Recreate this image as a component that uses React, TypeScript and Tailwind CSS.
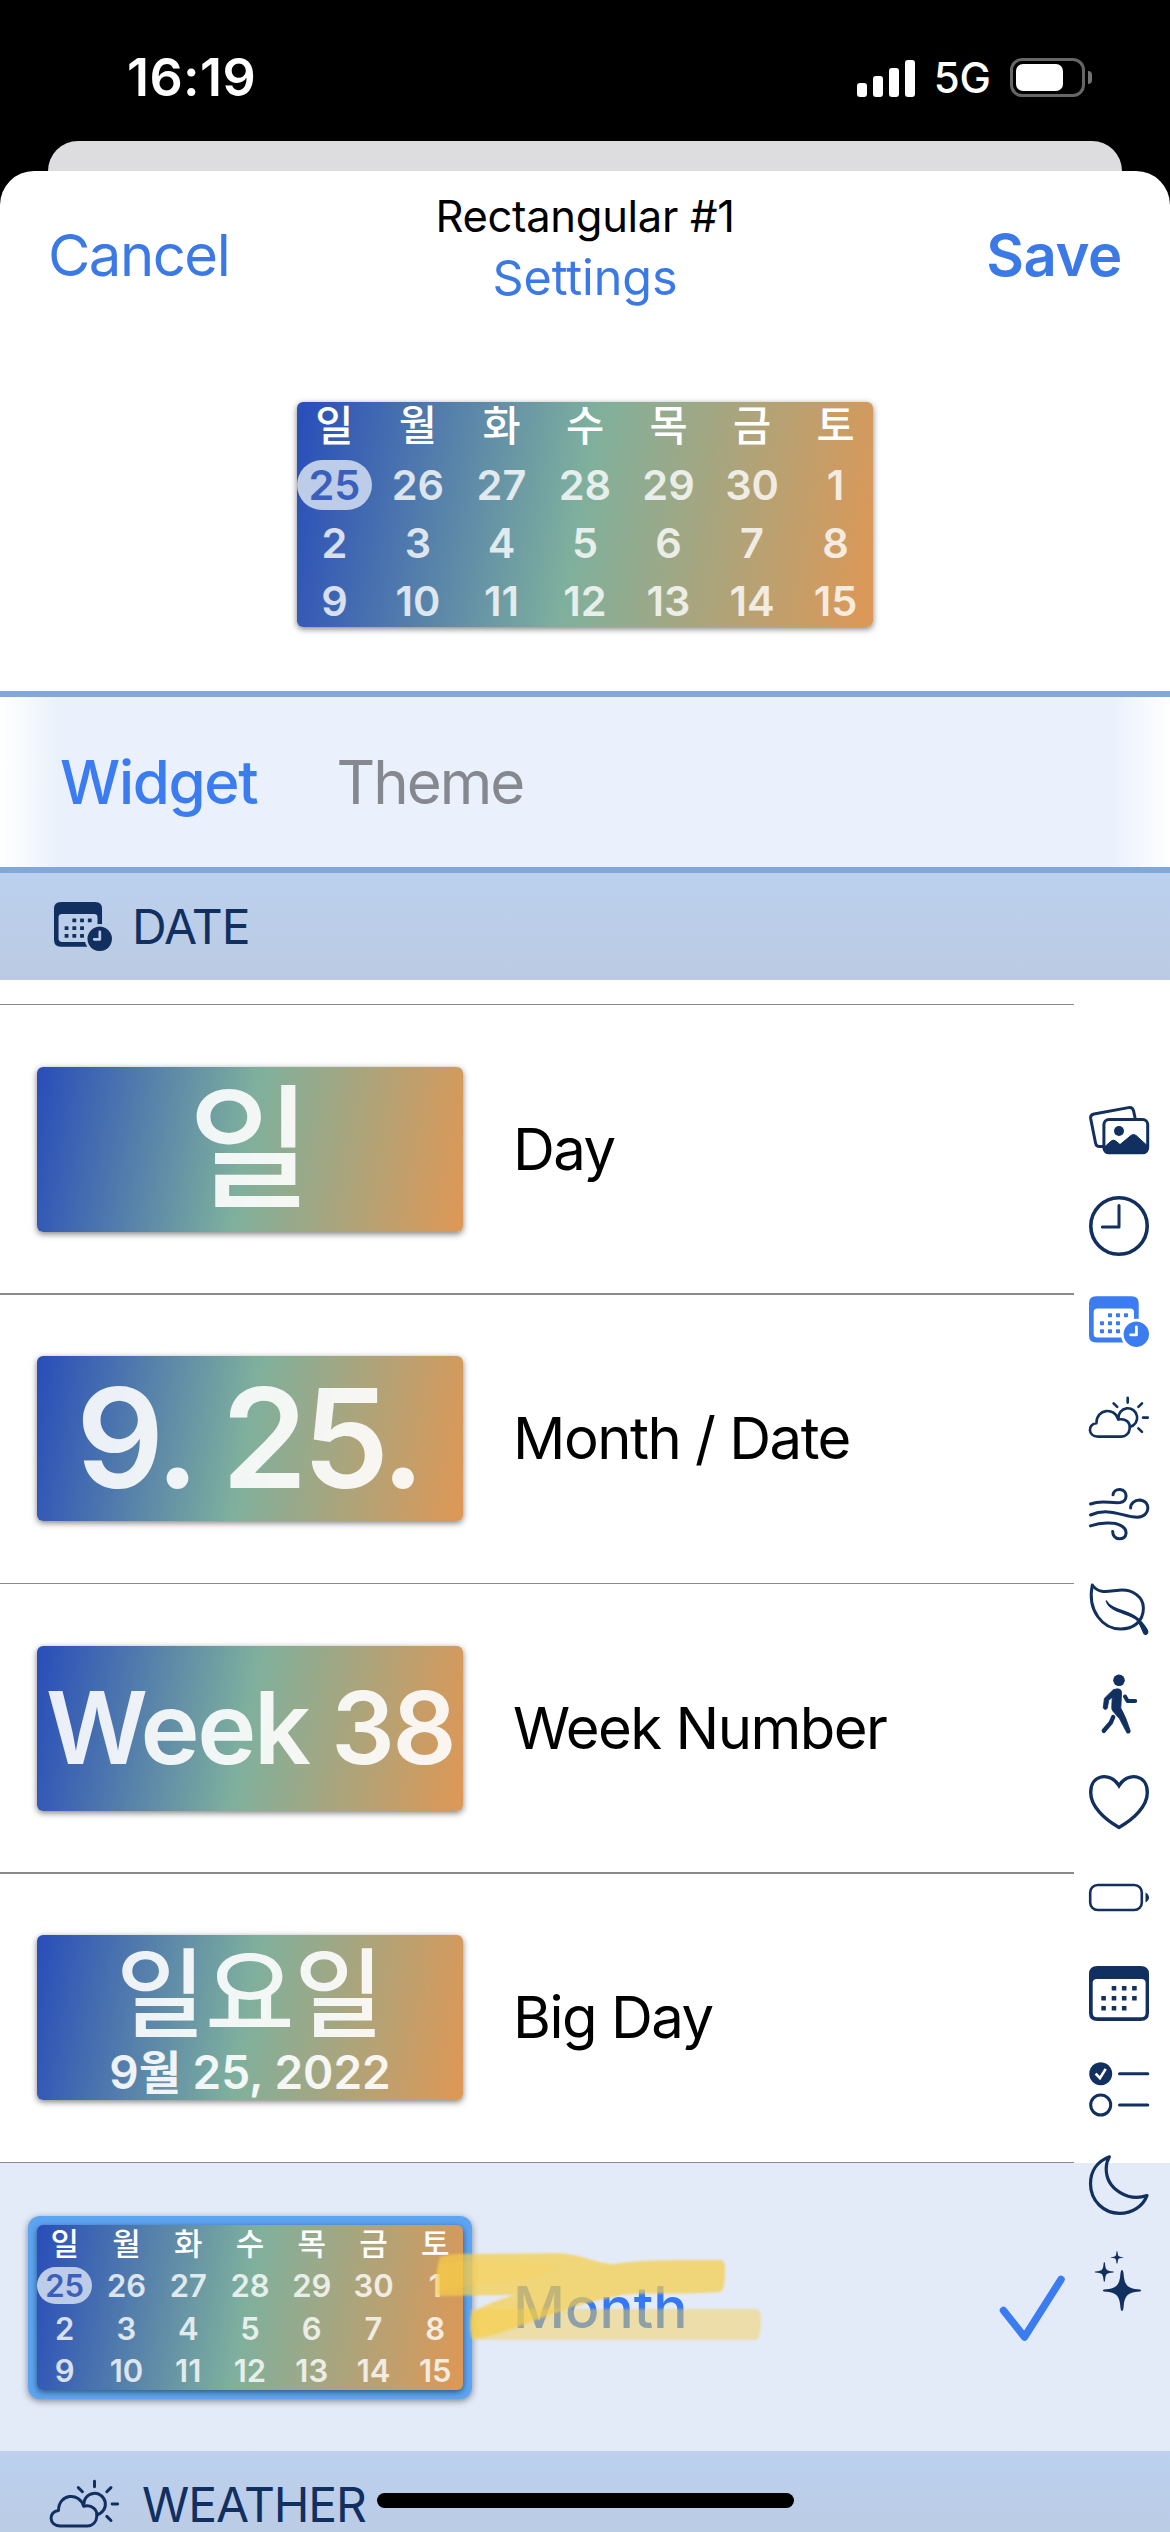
import { useId, type ReactNode } from 'react';
import clsx from 'clsx';

const weekdays = ['일', '월', '화', '수', '목', '금', '토'];

const weeks = [
  [25, 26, 27, 28, 29, 30, 1],
  [2, 3, 4, 5, 6, 7, 8],
  [9, 10, 11, 12, 13, 14, 15],
];

function Icon({ children, className = 'size-[60px]' }: { children: ReactNode; className?: string }) {
  return (
    <svg
      viewBox="0 0 60 60"
      fill="none"
      stroke="currentColor"
      strokeWidth="3"
      strokeLinecap="round"
      strokeLinejoin="round"
      className={clsx('shrink-0 overflow-visible', className)}
    >
      {children}
    </svg>
  );
}

function Dots({ points, size = 4 }: { points: number[][]; size?: number }) {
  return (
    <g fill="currentColor" stroke="none">
      {points.map(([x, y]) => (
        <rect key={`${x}-${y}`} x={x - size / 2} y={y - size / 2} width={size} height={size} rx="0.6" />
      ))}
    </g>
  );
}

function PhotosIcon() {
  return (
    <Icon>
      <path d="M46 17.5 L44.6 11 Q43.6 6.8 39.5 7.6 L5 14 Q1 14.8 1.7 18.8 L6.6 43.2 Q7.4 46.8 11 46.6 H13.5" />
      <rect x="14.9" y="19.6" width="43.8" height="33.2" rx="5" />
      <circle cx="30" cy="31" r="5" fill="currentColor" stroke="none" />
      <path
        d="M14.9 47.5 L22 41.2 Q24.5 39 27 41.2 L31 44.6 L42 35.4 Q44.5 33.4 47 35.4 L58.7 46 V49 Q58.7 52.8 54 52.8 H19 Q14.9 52.8 14.9 49 Z"
        fill="currentColor"
        strokeWidth="1"
      />
    </Icon>
  );
}

function ClockIcon() {
  return (
    <Icon>
      <circle cx="30" cy="30" r="28.2" strokeWidth="3.6" />
      <path d="M30 9.5 V31 H13.3" />
    </Icon>
  );
}

function CalendarClockIcon({ className }: { className?: string }) {
  const id = useId();
  return (
    <Icon className={className}>
      <mask id={id} maskUnits="userSpaceOnUse" x="-2" y="0" width="66" height="60">
        <rect x="-2" width="66" height="60" fill="#fff" stroke="none" />
        <circle cx="47.3" cy="42.2" r="15.4" fill="#000" stroke="none" />
      </mask>
      <g mask={`url(#${id})`}>
        <path
          d="M7 4.2 H42.7 Q49.7 4.2 49.7 11.2 V43.5 Q49.7 50.5 42.7 50.5 H7 Q0 50.5 0 43.5 V11.2 Q0 4.2 7 4.2 Z M8.5 16.5 Q4.7 16.5 4.7 20 V42 Q4.7 45.6 8.5 45.6 H41.4 Q45 45.6 45 42 V20 Q45 16.5 41.4 16.5 Z"
          fill="currentColor"
          fillRule="evenodd"
          stroke="none"
        />
        <Dots points={[[21, 23.2], [29, 23.2], [37, 23.2], [13, 31.2], [21, 31.2], [29, 31.2], [13, 39.2], [21, 39.2], [29, 39.2]]} />
      </g>
      <path
        d="M47.3 29.5 a12.7 12.7 0 1 0 0.01 0 Z M46 35 a1.4 1.4 0 0 1 2.8 0 V43 a1.2 1.2 0 0 1 -1.2 1.2 H41.6 a1.4 1.4 0 0 1 0 -2.8 H46 Z"
        fill="currentColor"
        fillRule="evenodd"
        stroke="none"
      />
    </Icon>
  );
}

function WeatherIcon({ className }: { className?: string }) {
  return (
    <Icon className={className}>
      <g strokeWidth="2.6">
        <path d="M9 48.6 C-1.6 48.6 -1.4 35.8 7.4 35.2 C7.4 20.5 25.8 18.8 29.3 31.6 C36.5 29.8 41.5 34.5 40.7 40.5 C40.2 45.5 36.8 48.6 32.5 48.6 Z" />
        <path d="M29.4 30.5 A9.4 9.4 0 1 1 40.8 38.9" />
        <path d="M38.7 9.8 V14.6 M53 15.3 L49.4 18.9 M54 29.6 H58.8 M49.4 40.3 L53 43.9 M24.6 15.3 L28.2 18.9" />
      </g>
    </Icon>
  );
}

function WindIcon() {
  return (
    <Icon>
      <path d="M1.5 20 C13 15.5 21 19.5 31 18.6 C39 17.5 39.2 6.4 31 5.6 C27 5.3 24.4 7.6 24 10.8" />
      <path d="M1.5 31 C21 22.8 34 33.2 48.5 33.2 C62 32.6 62 16.4 50.5 16 C45.5 16 41.5 19.5 41.6 24" />
      <path d="M1.5 41.9 C12 38.5 25 38 31.5 41.4 C40 45.8 38 54.8 30.3 54.8 C26 54.8 23.6 51.2 23.7 47.4" />
    </Icon>
  );
}

function LeafIcon() {
  return (
    <Icon>
      <path d="M3.3 6 C9.5 15.5 20 12 30 11.2 C45 10 54.4 19 54.4 29 C54.4 43 44 50 31.5 50 C14 50 -2 32 3.3 6 Z" />
      <path
        d="M17.4 22 C22.5 31.5 41 31 49.5 40 C53.5 44 57.5 49 58.7 52.5 C59 55 56.3 56.2 55 54.5 C52.5 49.5 51 44 47.5 40.5 C38 33.5 21 33.5 17.4 22 Z"
        fill="currentColor"
        strokeWidth="1.4"
      />
    </Icon>
  );
}

function WalkIcon() {
  return (
    <Icon>
      <circle cx="30" cy="5.3" r="5.8" fill="currentColor" stroke="none" />
      <path
        d="M24.5 14.6 Q32.5 12 32.6 18 L31.8 33 Q37 42 41.3 56 Q41.2 59 38 58 L30.5 43.8 L23.8 36 Q22.3 34 22.8 31 L23.2 22.5 L19.8 25 L18.3 33.3 Q16.5 36 14.2 33 L15.4 23.5 Z"
        fill="currentColor"
        strokeWidth="0.8"
      />
      <path d="M36 21.5 L38.6 26 H46.2" strokeWidth="4" />
      <path d="M24.2 42 L21.8 47.6 L14.8 55.8" strokeWidth="4.4" />
    </Icon>
  );
}

function HeartIcon() {
  return (
    <Icon>
      <path
        d="M30 14.6 C22 1.2 1.7 2.4 1.7 21.5 C1.7 35 15 48.2 30 56.4 C45 48.2 58.3 35 58.3 21.5 C58.3 2.4 38 1.2 30 14.6 Z"
        strokeWidth="3.4"
        strokeLinejoin="miter"
      />
    </Icon>
  );
}

function BatteryIcon() {
  return (
    <Icon>
      <rect x="1.2" y="18" width="51.6" height="25" rx="7.5" strokeWidth="2.6" />
      <path d="M56.5 25.5 Q60 27.5 60 30.5 Q60 33.5 56.5 35.5 Z" fill="currentColor" stroke="none" />
    </Icon>
  );
}

function CalendarIcon() {
  return (
    <Icon>
      <path
        d="M8.5 3 H51.5 Q60 3 60 11 V50 Q60 58 51.5 58 H8.5 Q0 58 0 50 V11 Q0 3 8.5 3 Z M8 16 Q3.7 16 3.7 20 V50 Q3.7 54.2 8 54.2 H52.3 Q56.6 54.2 56.6 50 V20 Q56.6 16 52.3 16 Z"
        fill="currentColor"
        fillRule="evenodd"
        stroke="none"
      />
      <Dots
        size={4.6}
        points={[[25, 25.2], [35.2, 25.2], [45.4, 25.2], [14.6, 35.2], [25, 35.2], [35.2, 35.2], [45.4, 35.2], [14.6, 45.2], [25, 45.2], [35.2, 45.2]]}
      />
    </Icon>
  );
}

function ListIcon() {
  return (
    <Icon>
      <path
        d="M11.7 3.2 a11.5 11.5 0 1 0 0.01 0 Z M5.6 15.6 L7.6 13.8 L10.8 17 L15.6 9.2 L17.8 10.6 L11.2 21.2 Z"
        fill="currentColor"
        fillRule="evenodd"
        stroke="none"
      />
      <circle cx="11.7" cy="46" r="10" />
      <path d="M30.5 14.7 H58.8 M30.5 46 H58.8" />
    </Icon>
  );
}

function MoonIcon() {
  return (
    <Icon>
      <path d="M20.4 1.8 C8 6.5 1.5 16.5 1.5 28.8 C1.5 46 15 58.3 30.5 58.3 C43.5 58.3 54 51 58 40.6 C40 47 17 34.5 17.2 13.5 C17.2 9 18.5 5 20.4 1.8 Z" strokeWidth="3.2" />
    </Icon>
  );
}

function SparklesIcon() {
  return (
    <Icon>
      <g fill="currentColor" stroke="none">
        <path d="M33 19 Q34.2 19 34.6 23 C35.4 32 37 36.4 46 38 L51 38.6 Q53.4 39.5 51 40.4 L46 41 C37 42.6 35.4 47 34.6 56 Q34.2 60 33 60 Q31.8 60 31.4 56 C30.6 47 29 42.6 20 41 L15 40.4 Q12.6 39.5 15 38.6 L20 38 C29 36.4 30.6 32 31.4 23 Q31.8 19 33 19 Z" />
        <path d="M15.3 11 Q16 11 16.2 14 C16.6 18.6 17.6 19.6 22 20.2 Q25 20.4 25 21 Q25 21.6 22 21.8 C17.6 22.4 16.6 23.4 16.2 28 Q16 31 15.3 31 Q14.6 31 14.4 28 C14 23.4 13 22.4 8.6 21.8 Q5.6 21.6 5.6 21 Q5.6 20.4 8.6 20.2 C13 19.6 14 18.6 14.4 14 Q14.6 11 15.3 11 Z" />
        <path d="M28 0 Q28.6 0 28.8 3 C29 5 29.8 5.6 32 5.9 Q34.6 6.1 34.6 6.5 Q34.6 6.9 32 7.1 C29.8 7.4 29 8 28.8 10 Q28.6 13 28 13 Q27.4 13 27.2 10 C27 8 26.2 7.4 24 7.1 Q21.4 6.9 21.4 6.5 Q21.4 6.1 24 5.9 C26.2 5.6 27 5 27.2 3 Q27.4 0 28 0 Z" />
      </g>
    </Icon>
  );
}

function WidgetCard({ children, className }: { children: ReactNode; className?: string }) {
  return (
    <div
      className={clsx(
        'flex shrink-0 flex-col rounded-[6px] bg-[linear-gradient(100deg,#2a4fb9_1%,#7fb09d_49%,#db9858_98%)] font-semibold text-white/90 shadow-[0_2px_6px_rgba(0,0,0,0.5)]',
        className,
      )}
    >
      {children}
    </div>
  );
}

function MonthGrid({ large = false }: { large?: boolean }) {
  const row = clsx('grid grid-cols-7', large ? 'h-[50px] gap-[8.6px] text-[41.5px]' : 'h-[37px] gap-[6.4px] text-[31px]');
  return (
    <WidgetCard className={clsx('justify-between', large ? 'h-[225px] w-[576px]' : 'h-[165px] w-[426px]')}>
      <div className={row}>
        {weekdays.map((day) => (
          <span key={day} className="flex items-center justify-center font-medium leading-none text-white">
            {day}
          </span>
        ))}
      </div>
      {weeks.map((week) => (
        <div key={week[0]} className={row}>
          {week.map((date) => (
            <span
              key={date}
              className={clsx(
                'flex items-center justify-center leading-none',
                date === 25 ? 'rounded-full bg-[#bccce9] text-[#3a60bc]' : 'text-white/80',
              )}
            >
              {date}
            </span>
          ))}
        </div>
      ))}
    </WidgetCard>
  );
}

function Row({ widget, label, className }: { widget: ReactNode; label: string; className: string }) {
  return (
    <div className={clsx('flex items-center gap-[50px] border-[#8a8a8e] pl-[37px]', className)}>
      {widget}
      <span className="text-[58px] leading-none tracking-[-1.5px]">{label}</span>
    </div>
  );
}

function SectionHeader({ children }: { children: ReactNode }) {
  return (
    <div className="flex h-[107px] shrink-0 items-center bg-linear-to-b from-[#bbd1ef] to-[#bbcae2] text-[48px] leading-none tracking-[-1.1px] text-[#12305f]">
      {children}
    </div>
  );
}

function StatusBar() {
  return (
    <div className="flex h-[141px] items-start justify-between pl-[127px] pr-[78px] text-white">
      <span className="pt-[53px] text-[52px] font-semibold leading-[50px] tracking-[0.4px]">16:19</span>
      <div className="flex items-center pt-[58px]">
        <div className="flex h-[38px] items-end gap-[6px]">
          <i className="h-[14px] w-[10px] rounded-[3px] bg-white" />
          <i className="h-[21px] w-[10px] rounded-[3px] bg-white" />
          <i className="h-[29px] w-[10px] rounded-[3px] bg-white" />
          <i className="h-[37px] w-[10px] rounded-[3px] bg-white" />
        </div>
        <span className="ml-[19px] text-[42px] font-medium leading-[39px]">5G</span>
        <div className="ml-[19px] h-[39px] w-[75px] rounded-[12px] border-[3px] border-white/40 p-[3px]">
          <div className="h-full w-[47px] rounded-[7px] bg-white" />
        </div>
        <div className="ml-[3px] h-[13px] w-[4px] rounded-r-full bg-white/45" />
      </div>
    </div>
  );
}

// Marker scribble drawn across the selected row
function Highlighter() {
  return (
    <svg viewBox="0 0 340 100" className="absolute left-[432px] top-[84px] h-[100px] w-[340px]">
      <defs>
        <filter id="marker-edge">
          <feGaussianBlur stdDeviation="1.2" />
        </filter>
      </defs>
      <g fill="#f7cd48" filter="url(#marker-edge)">
        <path
          d="M8 10 Q20 6 42 7 L125 6 C150 7 165 17 183 17 C205 13 230 13 289 13 Q294 14 293 24 Q293 44 288 45 C250 48 215 45 190 48 C150 56 115 68 88 79 Q65 88 40 92 Q36 78 40 66 Q55 55 84 48 L4 49 Q3 25 8 10 Z"
          opacity="0.72"
        />
        <path d="M39 62 L324 62 Q329 63 329 70 Q329 92 324 93 L44 93 Q36 90 39 62 Z" opacity="0.46" />
        <path d="M6 17 Q60 8 130 20 Q100 36 40 38 L6 44 Z" opacity="0.22" />
      </g>
    </svg>
  );
}

export default function App() {
  return (
    <div className="relative flex h-[2532px] w-[1170px] flex-col overflow-hidden bg-black font-['Inter','Noto_Sans_CJK_KR',sans-serif] text-black">
      <StatusBar />
      <div className="mx-[48px] h-[30px] shrink-0 rounded-t-[30px] bg-[#dddde0]" />

      {/* The black corners of the sheet sit on top of the sheet behind it */}
      <div className="flex min-h-0 flex-1 flex-col rounded-t-[34px] bg-white">
        <header className="flex h-[231px] shrink-0 items-start justify-between px-[48px]">
          <button className="mt-[54px] w-[200px] text-left text-[58px] leading-[60px] tracking-[-1.5px] text-[#3b79e6]">Cancel</button>
          <div className="mt-[15px] flex flex-col items-center leading-[61px]">
            <h1 className="text-[43.5px] tracking-[-0.3px]">Rectangular #1</h1>
            <span className="text-[48.5px] tracking-[-0.1px] text-[#3b79e6]">Settings</span>
          </div>
          <button className="mt-[54px] w-[200px] text-right text-[58px] font-semibold leading-[60px] tracking-[-0.4px] text-[#3b79e6]">Save</button>
        </header>

        <div className="flex h-[289px] shrink-0 items-start justify-center">
          <MonthGrid large />
        </div>

        <nav className="flex h-[182px] shrink-0 items-center gap-[79px] border-y-[6px] border-[#82a8da] bg-[linear-gradient(90deg,#fff,#eaf1fc_5%,#eaf1fc_95%,#fff)] pl-[60px] text-[60px] leading-none tracking-[-1.3px]">
          <span className="font-medium text-[#3b7cf0]">Widget</span>
          <span className="tracking-[-2px] text-[#86888f]">Theme</span>
        </nav>

        <SectionHeader>
          <CalendarClockIcon className="ml-[54px] mr-[20px] size-[58px]" />
          DATE
        </SectionHeader>

        <div className="relative flex shrink-0 flex-col pt-[24px]">
          <div className="mr-[96px] flex flex-col border-b border-[#8a8a8e]">
            <Row
              label="Day"
              className="h-[289px] border-t"
              widget={
                <WidgetCard className="h-[165px] w-[426px] items-center justify-center">
                  <span className="pb-[2px] text-[134px] font-medium leading-none">일</span>
                </WidgetCard>
              }
            />
            <Row
              label="Month / Date"
              className="h-[290px] border-t-2 pb-[2px]"
              widget={
                <WidgetCard className="h-[165px] w-[426px] items-center justify-center">
                  <span className="-ml-[4px] whitespace-nowrap text-[138px] leading-none tracking-[-5px]">9. 25.</span>
                </WidgetCard>
              }
            />
            <Row
              label="Week Number"
              className="h-[289px] border-t"
              widget={
                <WidgetCard className="h-[165px] w-[426px] items-center justify-center">
                  <span className="whitespace-nowrap text-[100px] leading-none tracking-[-2.4px]">Week 38</span>
                </WidgetCard>
              }
            />
            <Row
              label="Big Day"
              className="h-[290px] border-t-2 pb-[2px]"
              widget={
                <WidgetCard className="h-[165px] w-[426px] items-center">
                  <span className="mt-[9px] text-[97px] font-medium leading-[100px]">일요일</span>
                  <span className="text-[46px] leading-[57px]">9월 25, 2022</span>
                </WidgetCard>
              }
            />
          </div>

          <div className="relative flex h-[288px] items-center bg-[#e3ebf9] pl-[28px]">
            <div className="rounded-[12px] bg-[#5da5f2] p-[9px] shadow-[0_2px_7px_rgba(0,0,0,0.45)]">
              <MonthGrid />
            </div>
            <span className="ml-[41px] text-[57px] font-medium leading-none text-[#3478f6]">Month</span>
            <svg viewBox="0 0 66 66" fill="none" className="absolute left-[999px] top-[112px] size-[66px]">
              <path d="M4.5 35.5 L25.5 62 L62 4.5" stroke="#3b7cf0" strokeWidth="7.5" strokeLinecap="round" strokeLinejoin="round" />
            </svg>
            <Highlighter />
          </div>

          {/* Category index floating over the list */}
          <aside className="absolute right-[21px] top-[120px] flex flex-col gap-[35.9px] text-[#12305f]">
            <PhotosIcon />
            <ClockIcon />
            <CalendarClockIcon className="size-[60px] text-[#3b7cf0]" />
            <WeatherIcon />
            <WindIcon />
            <LeafIcon />
            <WalkIcon />
            <HeartIcon />
            <BatteryIcon />
            <CalendarIcon />
            <ListIcon />
            <MoonIcon />
            <SparklesIcon />
          </aside>
        </div>

        <SectionHeader>
          <WeatherIcon className="ml-[50px] mr-[23px] size-[69px]" />
          WEATHER
        </SectionHeader>
      </div>

      <div className="absolute bottom-[24px] left-[377px] h-[15px] w-[417px] rounded-full bg-black" />
    </div>
  );
}
